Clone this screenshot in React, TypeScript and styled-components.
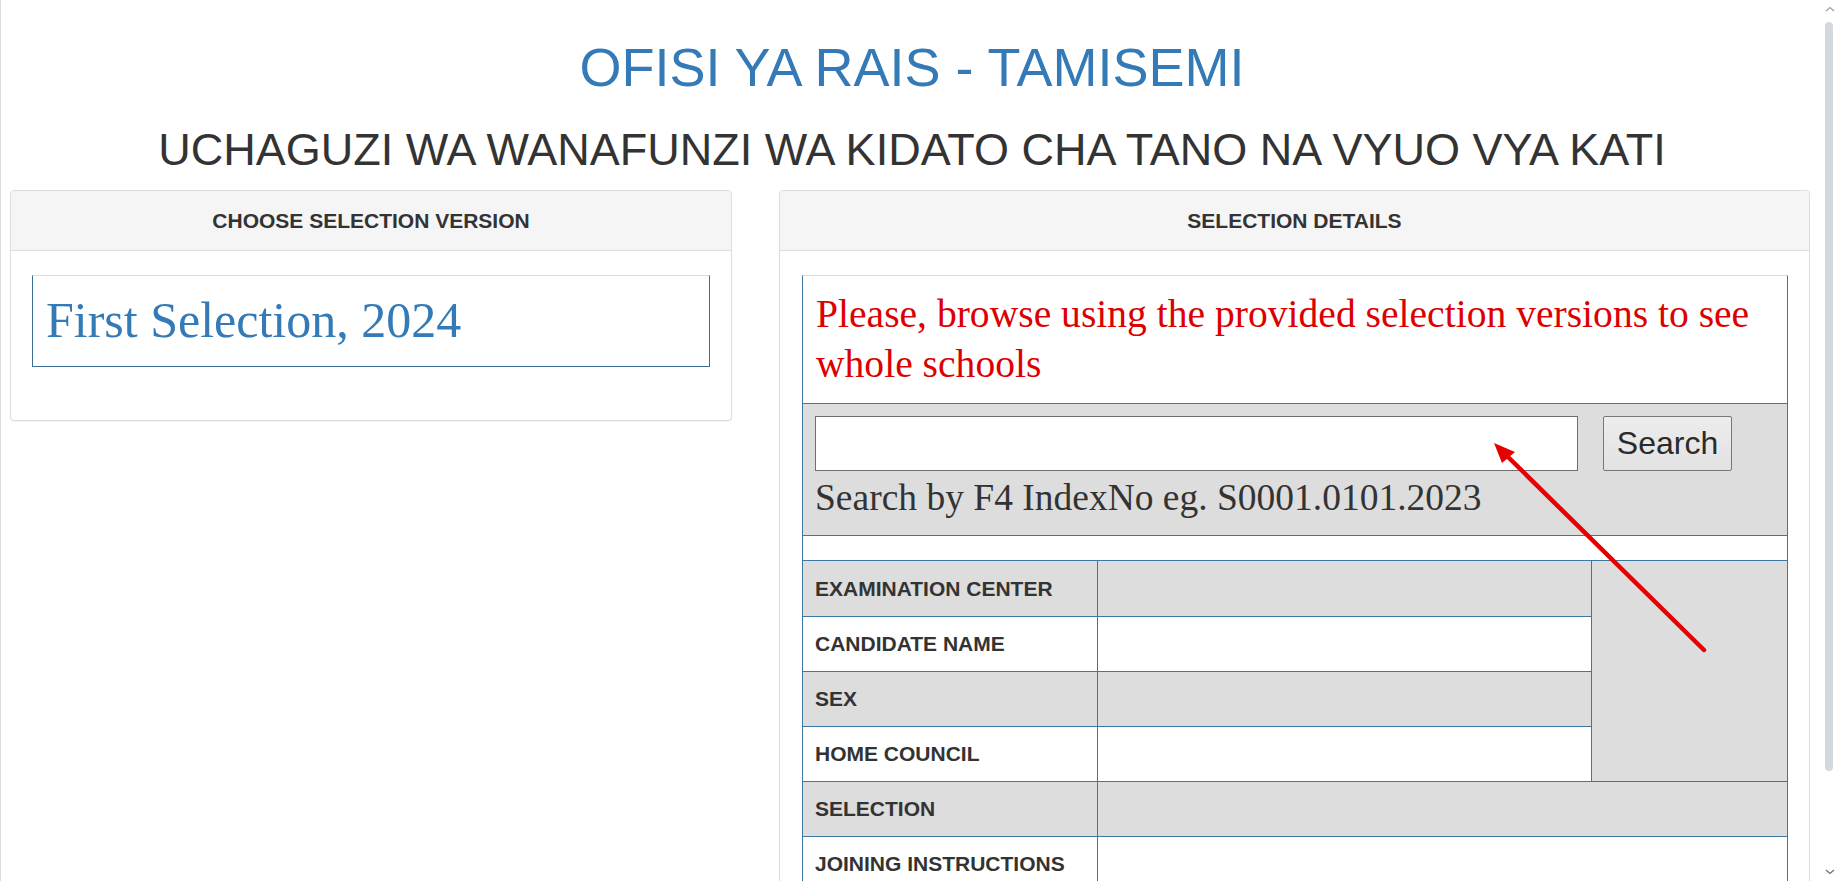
import React from "react";
import styled, { createGlobalStyle } from "styled-components";

const GlobalStyle = createGlobalStyle`
  html, body { margin: 0; padding: 0; background: #fff; }
  body { font-family: "Liberation Sans", Arial, sans-serif; color: #333; }
  * { box-sizing: border-box; }
`;

const BLUE_LINE = "#3f77a3";

const Page = styled.div`
  position: relative;
  min-height: 1010px;
  padding: 37px 15px 95px 0;
  box-shadow: inset 1px 0 0 #dcdcdc;
`;

const Header = styled.header`
  text-align: center;
`;

const Title = styled.h1`
  margin: 0 0 28px;
  font-size: 54px;
  line-height: 60px;
  font-weight: normal;
  color: #337ab7;
`;

const Subtitle = styled.h2`
  margin: 0 0 15px;
  font-size: 45px;
  line-height: 50px;
  font-weight: normal;
  color: #333;
`;

const Columns = styled.div`
  display: flex;
  align-items: flex-start;
  gap: 47px;
  padding: 0 14px 0 10px;
`;

const Panel = styled.section<{ $width?: number }>`
  ${(p) => (p.$width ? `width: ${p.$width}px; flex: none;` : "flex: 1;")}
  border: 1px solid #ddd;
  border-radius: 4px;
  background: #fff;
  box-shadow: 0 1px 1px rgba(0, 0, 0, 0.05);
`;

const PanelHeading = styled.div`
  height: 60px;
  display: flex;
  align-items: center;
  justify-content: center;
  background: #f5f5f5;
  border-bottom: 1px solid #ddd;
  border-radius: 3px 3px 0 0;
  font-size: 21px;
  font-weight: bold;
  color: #333;
`;

const PanelBody = styled.div<{ $left?: number }>`
  padding: 24px 21px 21px ${(p) => p.$left ?? 21}px;
`;

const VersionLink = styled.a`
  display: block;
  margin-bottom: 32px;
  padding: 15px 13px 17px;
  border: 1px solid #3b6f96;
  border-top-color: #ddd;
  font-family: "Liberation Serif", "Times New Roman", serif;
  font-size: 50px;
  line-height: 58px;
  color: #337ab7;
  text-decoration: none;
`;

const DetailsBox = styled.div`
  border: 1px solid ${BLUE_LINE};
  border-top-color: #ddd;
`;

const Notice = styled.p`
  margin: 0;
  padding: 13px 13px 14px;
  font-family: "Liberation Serif", "Times New Roman", serif;
  font-size: 39.6px;
  line-height: 50px;
  color: #dd0000;
`;

const SearchArea = styled.form`
  margin: 0;
  padding: 12px 12px 16px;
  background: #ddd;
  border-top: 1px solid ${BLUE_LINE};
`;

const SearchRow = styled.div`
  display: flex;
  gap: 25px;
`;

const SearchInput = styled.input`
  width: 763px;
  height: 55px;
  border: 1px solid #6f6f6f;
  background: #fff;
  font-size: 24px;
`;

const SearchButton = styled.button`
  width: 129px;
  height: 55px;
  padding: 0;
  border: 1px solid #777;
  border-radius: 2px;
  background: linear-gradient(#ededed, #e2e2e2);
  font-family: "Liberation Sans", Arial, sans-serif;
  font-size: 32px;
  color: #2b2b2b;
`;

const Hint = styled.div`
  margin-top: 6px;
  font-family: "Liberation Serif", "Times New Roman", serif;
  font-size: 37.5px;
  line-height: 42px;
  color: #333;
`;

const Spacer = styled.div`
  height: 26px;
  border-top: 1px solid ${BLUE_LINE};
  border-bottom: 1px solid ${BLUE_LINE};
`;

const DetailsGrid = styled.div`
  display: grid;
  grid-template-columns: 294px 494px 1fr;
  grid-auto-rows: 55px;
`;

const Cell = styled.div<{ $shade?: boolean; $first?: boolean }>`
  display: flex;
  align-items: center;
  background: ${(p) => (p.$shade ? "#ddd" : "#fff")};
  border-top: ${(p) => (p.$first ? "none" : `1px solid ${BLUE_LINE}`)};
`;

const LabelCell = styled(Cell)`
  padding-left: 12px;
  font-size: 21px;
  font-weight: bold;
  color: #333;
`;

const ValueCell = styled(Cell)<{ $wide?: boolean }>`
  border-left: 1px solid ${BLUE_LINE};
  ${(p) => (p.$wide ? "grid-column: 2 / span 2;" : "")}
`;

const PhotoCell = styled.div`
  grid-column: 3;
  grid-row: 1 / span 4;
  background: #ddd;
  border-left: 1px solid ${BLUE_LINE};
`;

const Arrow = styled.svg`
  position: absolute;
  left: 1480px;
  top: 430px;
  pointer-events: none;
`;

/* stand-in for the browser scrollbar seen in the screenshot */
const ScrollTrack = styled.div`
  position: fixed;
  top: 0;
  right: 0;
  width: 15px;
  height: 100vh;
  background: #fff;
  z-index: 5;
`;

const ScrollThumb = styled.div`
  position: absolute;
  left: 1px;
  top: 22px;
  width: 8px;
  height: 749px;
  border-radius: 4px;
  background: #d3d9df;
`;

const ScrollChevron = styled.svg<{ $bottom?: boolean }>`
  position: absolute;
  left: 1px;
  ${(p) => (p.$bottom ? "bottom: 6px;" : "top: 6px;")}
`;

const rows = [
  "EXAMINATION CENTER",
  "CANDIDATE NAME",
  "SEX",
  "HOME COUNCIL",
  "SELECTION",
  "JOINING INSTRUCTIONS",
];

export default function App() {
  return (
    <Page>
      <GlobalStyle />
      <Header>
        <Title>OFISI YA RAIS - TAMISEMI</Title>
        <Subtitle>UCHAGUZI WA WANAFUNZI WA KIDATO CHA TANO NA VYUO VYA KATI</Subtitle>
      </Header>
      <Columns>
        <Panel $width={722}>
          <PanelHeading>CHOOSE SELECTION VERSION</PanelHeading>
          <PanelBody>
            <VersionLink href="#">First Selection, 2024</VersionLink>
          </PanelBody>
        </Panel>
        <Panel>
          <PanelHeading>SELECTION DETAILS</PanelHeading>
          <PanelBody $left={22}>
            <DetailsBox>
              <Notice>
                Please, browse using the provided selection versions to see whole schools
              </Notice>
              <SearchArea onSubmit={(e) => e.preventDefault()}>
                <SearchRow>
                  <SearchInput type="text" />
                  <SearchButton type="submit">Search</SearchButton>
                </SearchRow>
                <Hint>Search by F4 IndexNo eg. S0001.0101.2023</Hint>
              </SearchArea>
              <Spacer />
              <DetailsGrid>
                {rows.map((label, i) => (
                  <React.Fragment key={label}>
                    <LabelCell $shade={i % 2 === 0} $first={i === 0}>
                      {label}
                    </LabelCell>
                    <ValueCell $shade={i % 2 === 0} $first={i === 0} $wide={i >= 4} />
                    {i === 0 && <PhotoCell />}
                  </React.Fragment>
                ))}
              </DetailsGrid>
            </DetailsBox>
          </PanelBody>
        </Panel>
      </Columns>
      <Arrow width="240" height="235" viewBox="0 0 240 235">
        <line x1="224" y1="220" x2="26" y2="25" stroke="#e60000" strokeWidth="4.5" strokeLinecap="round" />
        <polygon points="14,13 35,22 22,33" fill="#e60000" />
      </Arrow>
      <ScrollTrack>
        <ScrollChevron width="10" height="6" viewBox="0 0 10 6">
          <path d="M1 5 L5 1.5 L9 5" fill="none" stroke="#a0a0a0" strokeWidth="1.3" />
        </ScrollChevron>
        <ScrollThumb />
        <ScrollChevron $bottom width="10" height="6" viewBox="0 0 10 6">
          <path d="M1 1 L5 4.5 L9 1" fill="none" stroke="#707070" strokeWidth="1.3" />
        </ScrollChevron>
      </ScrollTrack>
    </Page>
  );
}
